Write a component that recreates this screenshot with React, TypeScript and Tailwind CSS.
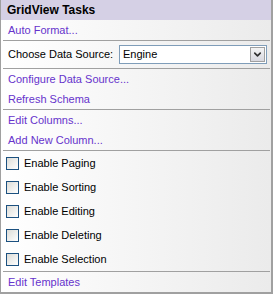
import { ChevronDown } from 'lucide-react'

const links1 = ['Configure Data Source...', 'Refresh Schema']
const links2 = ['Edit Columns...', 'Add New Column...']
const options = ['Enable Paging', 'Enable Sorting', 'Enable Editing', 'Enable Deleting', 'Enable Selection']

function Separator() {
  return <div className="h-px ml-[2px] mr-px bg-[#a0a0a0]" />
}

function TaskLink({ label }: { label: string }) {
  return (
    <div className="h-[20px] flex items-center pl-[7px]">
      <a href="#" className="text-[#6633cc] leading-none">
        {label}
      </a>
    </div>
  )
}

function CheckRow({ label }: { label: string }) {
  return (
    <label className="h-[24px] flex items-center pl-[5px] gap-[5px]">
      <span className="w-[13px] h-[13px] border border-[#1c5180] bg-gradient-to-br from-[#dcdcd7] to-white" />
      <span className="text-black leading-none">{label}</span>
    </label>
  )
}

export default function App() {
  return (
    <div
      className="w-[273px] h-[294px] border-l border-r-2 border-b-2 border-[#a0a0a0] text-[11px] flex flex-col"
      style={{ fontFamily: '"Liberation Sans", Arial, sans-serif' }}
    >
      {/* Header */}
      <div className="h-[20px] shrink-0 bg-[#d5d0e5] flex items-center pl-[6px] text-[12px] font-bold text-black">
        GridView Tasks
      </div>

      <div className="flex-1 flex flex-col bg-gradient-to-r from-white to-[#ebebeb]">
        <TaskLink label="Auto Format..." />
        <Separator />

        {/* Data source */}
        <div className="h-[27px] flex items-center pl-[7px] pr-[4px]">
          <span className="w-[111px] text-black">Choose Data Source:</span>
          <div className="flex-1 h-[19px] border border-[#7f9db9] bg-white flex items-center justify-between pl-[3px] pr-px">
            <span className="text-black">Engine</span>
            <span className="w-[15px] h-[15px] border border-[#a0a0a0] bg-gradient-to-b from-[#f4f4f4] to-[#d8d8e0] flex items-center justify-center">
              <ChevronDown size={11} strokeWidth={3.5} className="text-[#303030]" />
            </span>
          </div>
        </div>
        <Separator />

        {links1.map((l) => (
          <TaskLink key={l} label={l} />
        ))}
        <Separator />

        {links2.map((l) => (
          <TaskLink key={l} label={l} />
        ))}
        <Separator />

        {options.map((o) => (
          <CheckRow key={o} label={o} />
        ))}
        <Separator />

        <TaskLink label="Edit Templates" />
      </div>
    </div>
  )
}
